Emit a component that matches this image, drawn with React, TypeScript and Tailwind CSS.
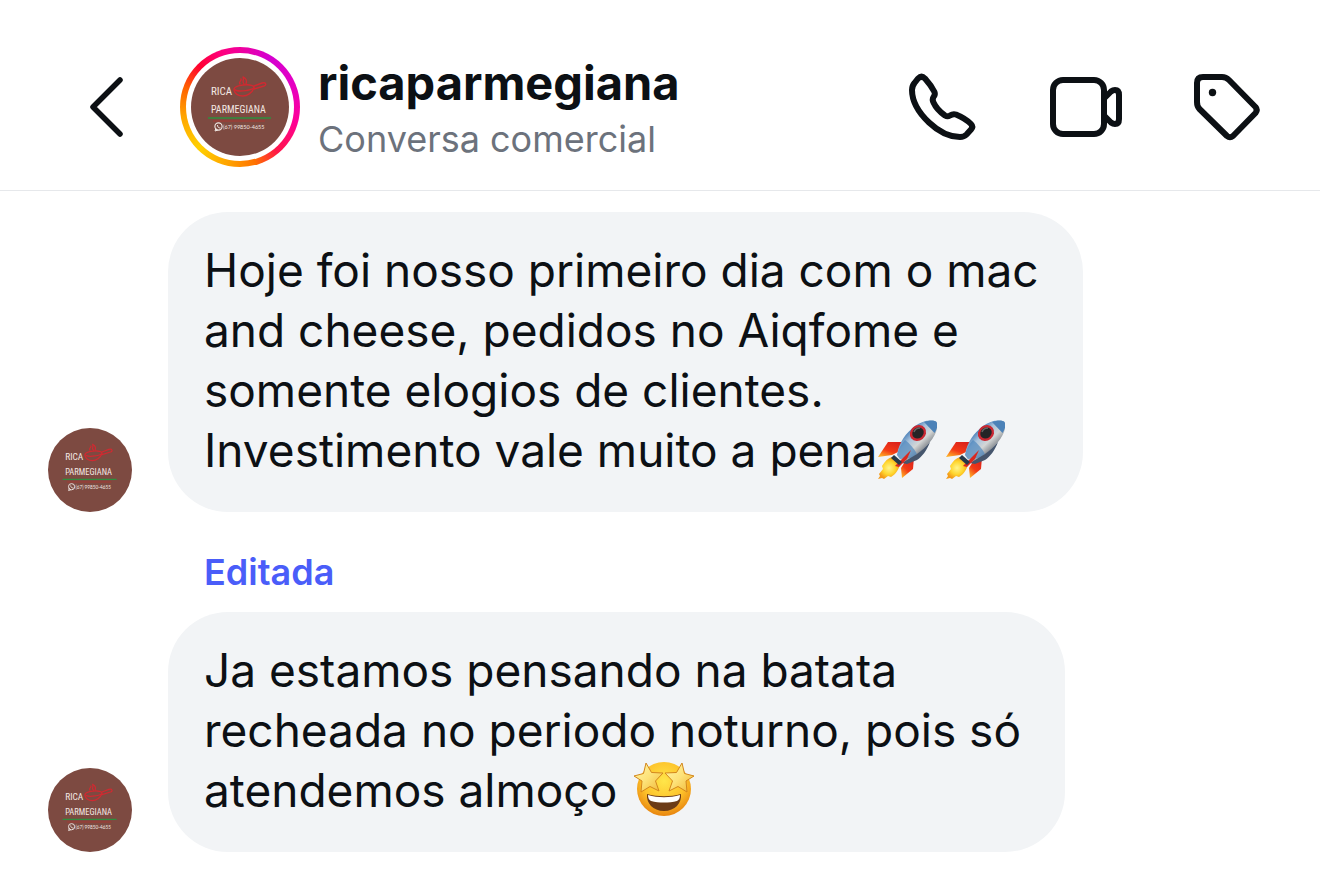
import type { ReactNode } from "react";

const Logo = () => {
  return (
    <svg viewBox="0 0 98 98" className="block h-full w-full rounded-full bg-[#7d4a41]" role="img" aria-label="Rica Parmegiana">
      <g fill="#f3e8e3" fontFamily="'Liberation Sans Narrow', 'Roboto Condensed', 'Liberation Sans', sans-serif">
        <text x="20" y="37" fontSize="11">RICA</text>
        <text x="20" y="55" fontSize="10">PARMEGIANA</text>
      </g>
      <g fill="none" stroke="#cf2a31" strokeWidth="1.4" strokeLinecap="round" strokeLinejoin="round">
        <path d="M43 31c1-4 17-6 20-2 1 3-17 6-20 2z" />
        <path d="M43 32c1 4 5 6 9 6s9-3 11-8M63 28l8-3c4-1 5 2 2 3l-10 3" />
        <path d="M49 26c-2-3 2-3 1-5M53 26c-3-3 1-4-1-7 4 2 4 4 3 7" />
      </g>
      <path d="M17 60h63" stroke="#2f8f3e" strokeWidth="1.400" />
      <path d="M22 63h52" stroke="#b9322f" strokeWidth="0.800" />
      <circle cx="27.500" cy="68.500" r="3.600" fill="none" stroke="#efe6e2" strokeWidth="1.100" />
      <path d="M25 70l-1 3 3-1M26.500 67c0 2 1 3 3 3" fill="none" stroke="#efe6e2" strokeWidth="1" />
      <text x="32" y="71" fontSize="5.500" fill="#f3e8e3" fontFamily="Lato, sans-serif">(67) 99850-4655</text>
    </svg>
  );
};

const Rocket = () => {
  return (
    <svg viewBox="0 0 60 60" className="-my-1 mr-2 inline-block size-[60px] align-[-9px]" role="img" aria-label="🚀">
      <defs>
        <linearGradient id="hull" x1="0.25" y1="0.25" x2="0.7" y2="0.75">
          <stop offset="0" stopColor="#3f78b5" />
          <stop offset="0.3" stopColor="#a9c3dc" />
          <stop offset="0.6" stopColor="#d4d6d5" />
          <stop offset="1" stopColor="#686e77" />
        </linearGradient>
        <linearGradient id="fin" x1="0.8" y1="0" x2="0.2" y2="1">
          <stop offset="0" stopColor="#d9201c" />
          <stop offset="0.6" stopColor="#f33a16" />
          <stop offset="1" stopColor="#ffae26" />
        </linearGradient>
        <radialGradient id="flame">
          <stop offset="0" stopColor="#fff58a" />
          <stop offset="0.6" stopColor="#ffd52d" />
          <stop offset="1" stopColor="#f39a18" />
        </radialGradient>
      </defs>
      <path d="M27 22L11 22 1 37 15 35 21 32z" fill="url(#fin)" />
      <path d="M37 37L36 49 25 58 24 48 29 40z" fill="url(#fin)" />
      <path d="M15 37C11 38 8 41 5 46l1 3-4 5 1 2-2 3 4-1 2 1 4-3 3 1c5-3 8-8 9-13z" fill="url(#flame)" />
      <path d="M59.500 2C54-1 45 1 38 6 29 13 22 22 20 35L25 43C36 38 45 32 53 22 59 15 62 6 59.500 2z" fill="url(#hull)" />
      <path d="M47 2c5-2 11-2 12.500 0 2 3 0 8-2 11z" fill="#4c82b8" />
      <path d="M28 20c4 3 9 8 12 14l-5 4-12 1-3-4c1-6 4-11 8-15z" fill="#4f87bd" opacity="0.700" />
      <path d="M40 34c4-3 9-7 13-12-3 8-8 15-13 18l-10 4-5-1z" fill="#46566d" />
      <path d="M34 30l-16 16 4 1 8-8z" fill="#d9281f" />
      <path d="M17 35l8 7-3 3-8-7z" fill="#263849" />
      <ellipse cx="41" cy="13" rx="8.500" ry="7.500" transform="rotate(-38 41 13)" fill="#ca2832" />
      <ellipse cx="41" cy="13" rx="6" ry="5.300" transform="rotate(-38 41 13)" fill="#242426" />
      <path d="M37 12c1-3 4-4 6-4" fill="none" stroke="#666" strokeWidth="1.500" />
    </svg>
  );
};

const StarStruck = () => {
  return (
    <svg viewBox="0 0 60 60" className="-my-1 ml-1 inline-block size-[60px] align-[-8px]" role="img" aria-label="🤩">
      <defs>
        <radialGradient id="face" cx="0.5" cy="0.35" r="0.65">
          <stop offset="0" stopColor="#ffe64a" />
          <stop offset="0.6" stopColor="#fdc22b" />
          <stop offset="1" stopColor="#e8850f" />
        </radialGradient>
        <linearGradient id="star" x1="0" y1="0" x2="1" y2="1">
          <stop offset="0" stopColor="#fff6a8" />
          <stop offset="0.5" stopColor="#fde279" />
          <stop offset="1" stopColor="#efb42f" />
        </linearGradient>
      </defs>
      <circle cx="30" cy="30" r="27" fill="url(#face)" />
      <path d="M13 35c10 3 24 3 34 0 1 9-6 17-17 17S12 44 13 35z" fill="#6b3b17" />
      <path d="M14 36c10 3 22 3 32 0 0 3-1 5-3 6-8 2-18 2-26 0-2-1-3-3-3-6z" fill="#fff" />
      <g fill="url(#star)" stroke="#d3861c" strokeWidth="1" strokeLinejoin="round">
        <path d="M12 4l5.500 9.500L29 14l-7.500 8L25 32l-9-4.500L7 33l1-11L0 17l9.500-2.500z" />
        <path d="M48 4l-5.500 9.500L31 14l7.500 8L35 32l9-4.500L53 33l-1-11L60 17l-9.500-2.500z" />
      </g>
    </svg>
  );
};

const Message = ({ children }: { children: ReactNode }) => {
  return (
    <div className="flex items-end gap-9">
      <div className="size-[84px] shrink-0">
        <Logo />
      </div>
      <p className="rounded-[60px] bg-[#f2f4f6] pt-7 pr-11 pb-8 pl-9 text-[46px] leading-[60px]">{children}</p>
    </div>
  );
};

const actions = [
  {
    label: "Ligar",
    icon: <path d="M20 11.500Q23.500 8 27 11.500C31 16 34 20 36.500 25Q37.500 27.500 35.500 30Q34 32.500 35.500 35.500C38 41 42 45 47 48.500Q49.500 50 52 48.500Q55 46.500 58 47.500C64 50 69 53 73 57Q75.500 59.500 73 62.500L68.500 67.500Q66 70 62 70C52 70 41 65 31 55.500C21 46 14 34 14 23Q14 19 16.500 16Z" />,
  },
  {
    label: "Chamada de vídeo",
    icon: (
      <>
        <rect x="11" y="13" width="51" height="54" rx="10" />
        <path d="M63 30.500L69 24.500Q71 23 73 23Q77 23 77 28V52Q77 57 73 57Q71 57 69 55.500L63 49.500" />
      </>
    ),
  },
  {
    label: "Etiqueta",
    icon: (
      <>
        <path d="M17 10H36Q40 10 43 13L69.500 40Q72 43 69.500 46L47 69Q44 71.500 41 69L13.500 42Q11 39.500 11 35V16Q11 10 17 10Z" />
        <circle cx="26.500" cy="25.500" r="3.700" fill="currentColor" stroke="none" />
      </>
    ),
  },
];

const Header = () => {
  return (
    <header className="flex items-center border-b border-[#e6e8eb] pt-[47px] pr-[54px] pb-[23px] pl-[86px]">
      <button aria-label="Voltar" className="mr-[54px] shrink-0">
        <svg viewBox="0 0 40 64" className="h-16 w-10" fill="none" stroke="currentColor" strokeWidth="5.500" strokeLinecap="round" strokeLinejoin="round">
          <path d="M34 5L7 32l27 27" />
        </svg>
      </button>
      <div className="size-[120px] shrink-0 rounded-full bg-[conic-gradient(#f0009c,#d400d0_30deg,#e400c4_65deg,#ff0096_105deg,#ff1648_140deg,#ff7200_165deg,#ffa000_190deg,#ffd000_225deg,#ffa600_260deg,#ff6000_290deg,#ff0030_315deg,#ff007c_340deg,#f0009c)] p-[6px]">
        <div className="h-full w-full rounded-full bg-white p-[5px]">
          <Logo />
        </div>
      </div>
      <div className="ml-[18px] min-w-0 flex-1 pt-1">
        <h1 className="text-[47px] leading-[60px] font-bold">ricaparmegiana</h1>
        <p className="text-[36px] leading-[52px] text-[#6c727c]">Conversa comercial</p>
      </div>
      <nav className="flex shrink-0 gap-16">
        {actions.map((action) => (
          <button key={action.label} aria-label={action.label}>
            <svg viewBox="0 0 80 80" className="size-20" fill="none" stroke="currentColor" strokeWidth="6" strokeLinecap="round" strokeLinejoin="round">
              {action.icon}
            </svg>
          </button>
        ))}
      </nav>
    </header>
  );
};

export default function App() {
  return (
    <div className="min-h-screen bg-white font-[Inter,sans-serif] text-[#0c1014]">
      <Header />
      <main className="px-12 pt-[21px] pb-6">
        <Message>
          Hoje foi nosso primeiro dia com o mac
          <br />
          and cheese, pedidos no Aiqfome e
          <br />
          somente elogios de clientes.
          <br />
          Investimento vale muito a pena
          <Rocket />
          <Rocket />
        </Message>
        <p className="pt-[34px] pb-[14px] pl-[156px] text-[36px] leading-[52px] font-semibold text-[#4a5df9]">Editada</p>
        <Message>
          Ja estamos pensando na batata
          <br />
          recheada no periodo noturno, pois só
          <br />
          atendemos almoço <StarStruck />
        </Message>
      </main>
    </div>
  );
}
